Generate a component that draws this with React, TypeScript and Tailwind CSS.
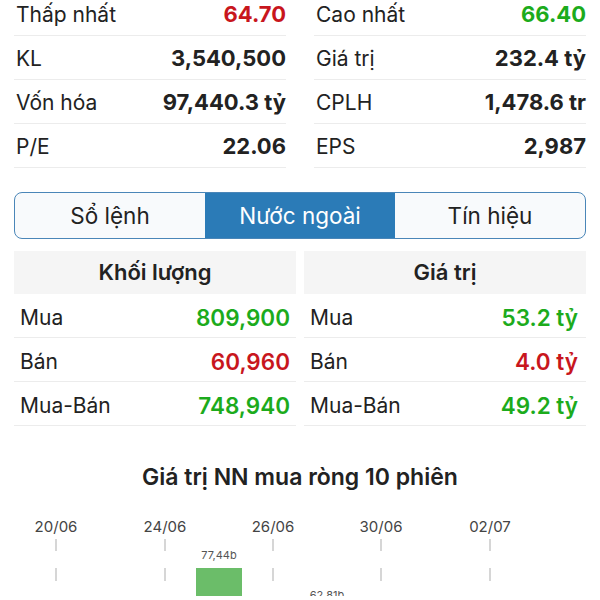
import React from "react";

const RED = "text-[#c8161d]";
const GREEN = "text-[#1cab1c]";

function StatRow({ label, value, color }: { label: string; value: string; color?: string }) {
  return (
    <div className="flex h-11 items-center justify-between border-b border-[#ececec] pl-[2px] pt-[2px]">
      <span className="text-[21px] text-[#222]">{label}</span>
      <span className={`text-[22px] font-bold ${color ?? "text-[#222]"}`}>{value}</span>
    </div>
  );
}

function FlowRow({ label, value, color, pr }: { label: string; value: string; color: string; pr: string }) {
  return (
    <div className={`flex h-11 items-center justify-between border-b border-[#ececec] pl-1.5 pt-1 ${pr}`}>
      <span className="text-[21px] text-[#222]">{label}</span>
      <span className={`text-[22.5px] font-semibold ${color}`}>{value}</span>
    </div>
  );
}

function Chart() {
  const xs = [56, 110, 165, 219, 273, 327, 381, 436, 490, 544];
  const dates = [
    { x: 56, t: "20/06" },
    { x: 165, t: "24/06" },
    { x: 273, t: "26/06" },
    { x: 381, t: "30/06" },
    { x: 490, t: "02/07" },
  ];
  return (
    <svg width="600" height="100" viewBox="0 500 600 100" className="block">
      {dates.map((d) => (
        <g key={d.t}>
          <text x={d.x} y={536} textAnchor="middle" fontSize="15" fill="#444" fontFamily="Inter, sans-serif">
            {d.t}
          </text>
          <line x1={d.x} x2={d.x} y1={543} y2={555} stroke="#c9c9c9" strokeWidth="1.5" />
          <line x1={d.x} x2={d.x} y1={572} y2={585} stroke="#c9c9c9" strokeWidth="1.5" />
        </g>
      ))}
      <rect x={xs[3] - 23} y={572} width={46} height={40} fill="#6bbd69" />
      <text x={xs[3]} y={563} textAnchor="middle" fontSize="11" fill="#555" fontFamily="Inter, sans-serif">
        77,44b
      </text>
      <text x={xs[5]} y={603} textAnchor="middle" fontSize="11" fill="#555" fontFamily="Inter, sans-serif">
        62,81b
      </text>
    </svg>
  );
}

export default function App() {
  return (
    <div className="h-[600px] w-[600px] overflow-hidden bg-white font-['Inter',sans-serif]">
      <div className="-mt-2 grid grid-cols-2 gap-x-7 px-[14px]">
        <div>
          <StatRow label="Thấp nhất" value="64.70" color={RED} />
          <StatRow label="KL" value="3,540,500" />
          <StatRow label="Vốn hóa" value="97,440.3 tỷ" />
          <StatRow label="P/E" value="22.06" />
        </div>
        <div>
          <StatRow label="Cao nhất" value="66.40" color={GREEN} />
          <StatRow label="Giá trị" value="232.4 tỷ" />
          <StatRow label="CPLH" value="1,478.6 tr" />
          <StatRow label="EPS" value="2,987" />
        </div>
      </div>

      <div className="mx-[14px] mt-6 grid h-[47px] grid-cols-3 overflow-hidden rounded-lg border-[1.5px] border-[#4a86b8] bg-[#f8fafc]">
        <div className="flex items-center justify-center text-[22.5px] text-[#222]">Sổ lệnh</div>
        <div className="flex items-center justify-center bg-[#2b7bb7] text-[22.5px] text-white">Nước ngoài</div>
        <div className="flex items-center justify-center text-[22.5px] text-[#222]">Tín hiệu</div>
      </div>

      <div className="mt-3 grid grid-cols-2 gap-2 px-[14px]">
        <div>
          <div className="flex h-[43px] items-center justify-center bg-[#f5f5f5] text-[22px] font-semibold text-[#222]">
            Khối lượng
          </div>
          <FlowRow label="Mua" value="809,900" color={GREEN} pr="pr-1.5" />
          <FlowRow label="Bán" value="60,960" color={RED} pr="pr-1.5" />
          <FlowRow label="Mua-Bán" value="748,940" color={GREEN} pr="pr-1.5" />
        </div>
        <div>
          <div className="flex h-[43px] items-center justify-center bg-[#f5f5f5] text-[22px] font-semibold text-[#222]">
            Giá trị
          </div>
          <FlowRow label="Mua" value="53.2 tỷ" color={GREEN} pr="pr-2" />
          <FlowRow label="Bán" value="4.0 tỷ" color={RED} pr="pr-2" />
          <FlowRow label="Mua-Bán" value="49.2 tỷ" color={GREEN} pr="pr-2" />
        </div>
      </div>

      <div className="mt-[37px] text-center text-[23px] font-semibold leading-[28px] text-[#222]">
        Giá trị NN mua ròng 10 phiên
      </div>
      <div className="mt-[5px]">
        <Chart />
      </div>
    </div>
  );
}
